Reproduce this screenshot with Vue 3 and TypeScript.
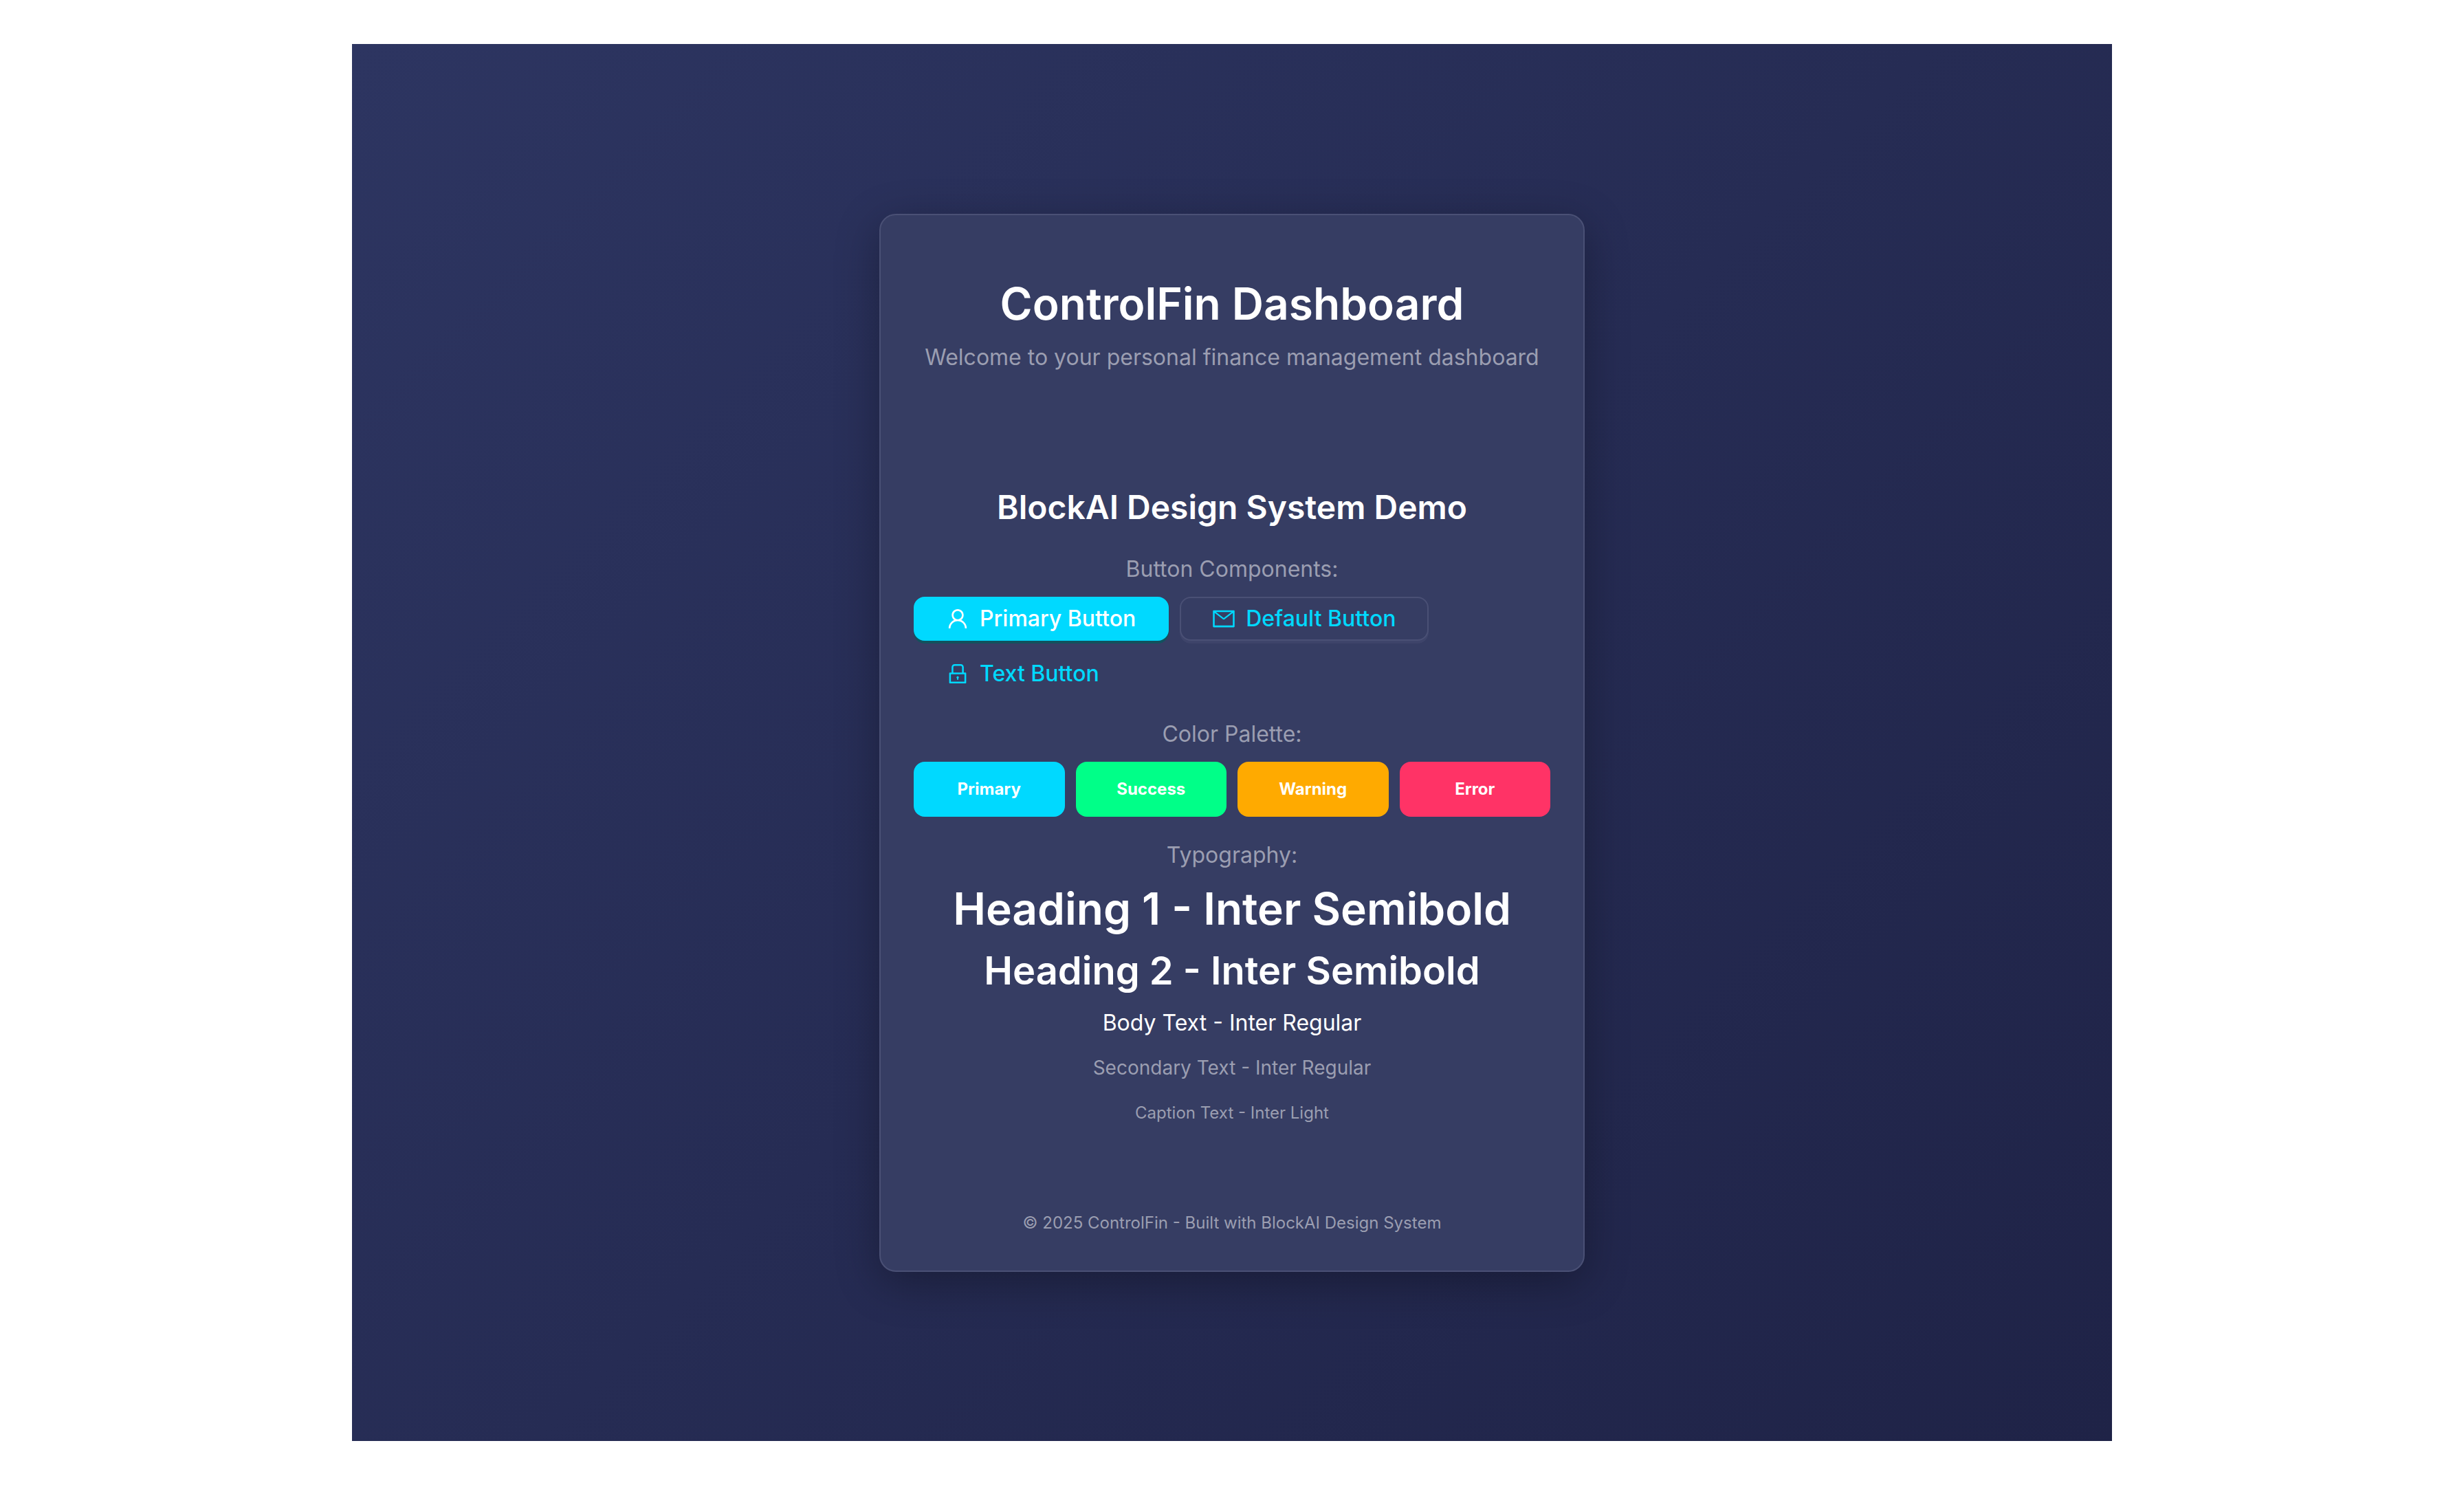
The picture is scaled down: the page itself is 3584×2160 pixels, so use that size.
<script setup lang="ts">
interface Swatch {
  label: string
  tone: string
}

const swatches: Swatch[] = [
  { label: 'Primary', tone: 'primary' },
  { label: 'Success', tone: 'success' },
  { label: 'Warning', tone: 'warning' },
  { label: 'Error', tone: 'error' },
]
</script>

<template>
  <div class="page">
    <main class="stage">
      <article class="card">
        <header class="intro">
          <h1 class="title">ControlFin Dashboard</h1>
          <p class="muted">Welcome to your personal finance management dashboard</p>
        </header>

        <section class="demo">
          <h3 class="subtitle">BlockAI Design System Demo</h3>

          <div class="group">
            <p class="muted">Button Components:</p>
            <div class="buttons">
              <button type="button" class="btn btn-primary">
                <svg class="icon" viewBox="0 0 1024 1024" aria-hidden="true">
                  <path d="M858.5 763.6a374 374 0 00-80.6-119.5 375.63 375.63 0 00-119.5-80.6c-.4-.2-.8-.3-1.2-.5C719.5 518 760 444.7 760 362c0-137-111-248-248-248S264 225 264 362c0 82.7 40.5 156 102.8 201.1-.4.2-.8.3-1.2.5-44.8 18.9-85 46-119.5 80.6a375.63 375.63 0 00-80.6 119.5A371.7 371.7 0 00136 901.8a8 8 0 008 8.2h60c4.4 0 7.9-3.5 8-7.8 2-77.2 33-149.5 87.8-204.3 56.7-56.7 132-87.9 212.2-87.9s155.5 31.2 212.2 87.9C779 752.7 810 825 812 902.2c.1 4.4 3.6 7.8 8 7.8h60a8 8 0 008-8.2c-1-47.8-10.9-94.3-29.5-138.2zM512 534c-45.9 0-89.1-17.9-121.6-50.4S340 407.9 340 362c0-45.9 17.9-89.1 50.4-121.6S466.1 190 512 190s89.1 17.9 121.6 50.4S684 316.1 684 362c0 45.9-17.9 89.1-50.4 121.6S557.9 534 512 534z" />
                </svg>
                <span>Primary Button</span>
              </button>
              <button type="button" class="btn btn-default">
                <svg class="icon" viewBox="0 0 1024 1024" aria-hidden="true">
                  <path d="M928 160H96c-17.7 0-32 14.3-32 32v640c0 17.7 14.3 32 32 32h832c17.7 0 32-14.3 32-32V192c0-17.7-14.3-32-32-32zm-40 110.8V792H136V270.8l-27.6-21.5 39.3-50.5 42.8 33.3h643.1l42.8-33.3 39.3 50.5-27.7 21.5zM833.6 232L512 482 190.4 232l-42.8-33.3-39.3 50.5 27.6 21.5 341.6 265.6a55.99 55.99 0 0068.7 0L888 270.8l27.6-21.5-39.3-50.5-42.7 33.2z" />
                </svg>
                <span>Default Button</span>
              </button>
              <button type="button" class="btn btn-text">
                <svg class="icon" viewBox="0 0 1024 1024" aria-hidden="true">
                  <path d="M832 464h-68V240c0-70.7-57.3-128-128-128H388c-70.7 0-128 57.3-128 128v224h-68c-17.7 0-32 14.3-32 32v384c0 17.7 14.3 32 32 32h640c17.7 0 32-14.3 32-32V496c0-17.7-14.3-32-32-32zM332 240c0-30.9 25.1-56 56-56h248c30.9 0 56 25.1 56 56v224H332V240zm460 600H232V536h560v304zM484 701v53c0 4.4 3.6 8 8 8h40c4.4 0 8-3.6 8-8v-53a48.01 48.01 0 10-56 0z" />
                </svg>
                <span>Text Button</span>
              </button>
            </div>
          </div>

          <div class="group">
            <p class="muted">Color Palette:</p>
            <div class="palette">
              <div v-for="s in swatches" :key="s.label" class="swatch" :class="s.tone">{{ s.label }}</div>
            </div>
          </div>

          <div class="group">
            <p class="muted">Typography:</p>
            <h1 class="title">Heading 1 - Inter Semibold</h1>
            <h2 class="heading">Heading 2 - Inter Semibold</h2>
            <p>Body Text - Inter Regular</p>
            <p><span class="secondary">Secondary Text - Inter Regular</span></p>
            <p><span class="caption">Caption Text - Inter Light</span></p>
          </div>
        </section>

        <footer class="foot">
          <span class="caption">© 2025 ControlFin - Built with BlockAI Design System</span>
        </footer>
      </article>
    </main>
  </div>
</template>

<style>
body {
  background: #ffffff;
}
</style>

<style scoped>
.page {
  box-sizing: border-box;
  min-height: 100vh;
  max-width: 2688px;
  margin: 0 auto;
  padding: 64px;
  display: flex;
  font-family: Inter, "Noto Sans", sans-serif;
  font-size: 32px;
  line-height: 48px;
  color: #ffffff;
}

.stage {
  flex: 1;
  display: flex;
  align-items: center;
  justify-content: center;
  background: linear-gradient(135deg, #2d3561 0%, #1f2347 100%);
}

.card {
  box-sizing: border-box;
  width: 100%;
  max-width: 1026px;
  padding: 48px;
  border: 2px solid #4a5075;
  border-radius: 24px;
  background: #363d63;
  box-shadow: 0 16px 64px rgba(0, 0, 0, 0.3);
  text-align: center;
}

h1,
h2,
h3,
p {
  margin: 0;
}

.intro {
  display: flex;
  flex-direction: column;
  gap: 16px;
  padding: 43px 0 48px;
}

.title,
.heading,
.subtitle {
  font-weight: 600;
}

.title {
  font-size: 64px;
  line-height: 76px;
}

.heading {
  font-size: 56px;
  line-height: 72px;
}

.subtitle {
  font-size: 48px;
  line-height: 68px;
}

.muted,
.secondary,
.caption {
  color: #9b9eb1;
}

.secondary,
.caption {
  line-height: 36px;
}

.secondary {
  font-size: 28px;
}

.caption {
  font-size: 24px;
}

.demo {
  display: flex;
  flex-direction: column;
  gap: 32px;
  padding: 112px 0;
}

.group {
  display: flex;
  flex-direction: column;
  gap: 16px;
}

.buttons {
  display: flex;
  flex-wrap: wrap;
  gap: 16px;
}

.btn {
  box-sizing: border-box;
  display: inline-flex;
  align-items: center;
  justify-content: center;
  gap: 16px;
  height: 64px;
  padding: 0 46px;
  border: 2px solid transparent;
  border-radius: 16px;
  background: transparent;
  color: #00d9ff;
  font: inherit;
  font-weight: 500;
  cursor: pointer;
}

.btn-primary {
  border-color: #00d9ff;
  background: #00d9ff;
  color: #ffffff;
  box-shadow: 0 4px 0 #12525e;
}

.btn-default {
  border-color: #4a5075;
  background: #363d63;
  box-shadow: 0 4px 0 #3e446a;
}

.icon {
  width: 36px;
  height: 36px;
  margin: 0 -2px;
  fill: currentColor;
}

.palette {
  display: grid;
  grid-template-columns: repeat(4, 1fr);
  gap: 16px;
}

.swatch {
  display: flex;
  align-items: center;
  justify-content: center;
  height: 80px;
  border-radius: 16px;
  font-size: 24px;
  font-weight: 700;
}

.primary {
  background: #00d9ff;
}

.success {
  background: #00ff88;
}

.warning {
  background: #ffaa00;
}

.error {
  background: #ff3366;
}
</style>
